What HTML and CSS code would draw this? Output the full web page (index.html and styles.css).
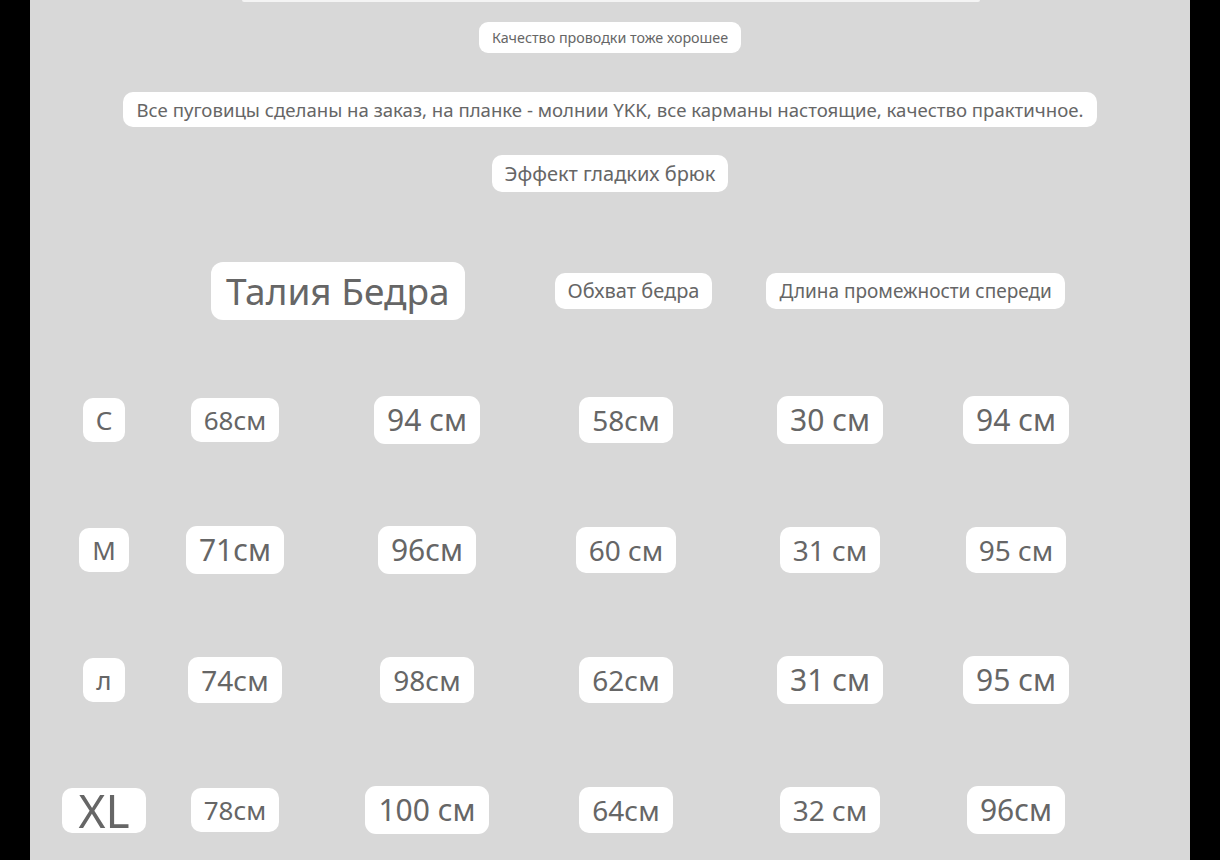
FILE: index.html
```html
<!DOCTYPE html>
<html lang="ru">
<head>
    <meta charset="UTF-8">
    <meta name="viewport" content="width=device-width, initial-scale=1.0">
    <title>Размерная сетка</title>
    <link rel="stylesheet" href="styles.css">
</head>
<body>
    <div class="page">
        <div class="top-edge"></div>

        <div class="notes">
            <span class="pill note-small">Качество проводки тоже хорошее</span>
            <span class="pill note-wide">Все пуговицы сделаны на заказ, на планке - молнии YKK, все карманы настоящие, качество практичное.</span>
            <span class="pill note-mid">Эффект гладких брюк</span>
        </div>

        <div class="head">
            <span class="pill head-main">Талия Бедра</span>
            <span class="pill head-sub" id="hip">Обхват бедра</span>
            <span class="pill head-sub" id="rise">Длина промежности спереди</span>
        </div>

        <div class="sizes">
            <div class="row">
                <span class="pill letter">С</span>
                <span class="pill sm">68см</span>
                <span class="pill lg">94 см</span>
                <span class="pill md">58см</span>
                <span class="pill lg">30 см</span>
                <span class="pill lg">94 см</span>
            </div>
            <div class="row">
                <span class="pill letter">М</span>
                <span class="pill lg">71см</span>
                <span class="pill lg">96см</span>
                <span class="pill md">60 см</span>
                <span class="pill md">31 см</span>
                <span class="pill md">95 см</span>
            </div>
            <div class="row">
                <span class="pill letter">л</span>
                <span class="pill md">74см</span>
                <span class="pill md">98см</span>
                <span class="pill md">62см</span>
                <span class="pill lg">31 см</span>
                <span class="pill lg">95 см</span>
            </div>
            <div class="row">
                <span class="pill letter xl">XL</span>
                <span class="pill sm">78см</span>
                <span class="pill lg">100 см</span>
                <span class="pill md">64см</span>
                <span class="pill md">32 см</span>
                <span class="pill lg">96см</span>
            </div>
        </div>
    </div>
</body>
</html>
```

FILE: styles.css
```css
html,
body {
    margin: 0;
    background-color: black;
}
.page {
    width: 1160px;
    height: 860px;
    margin-left: 30px;
    background-color: #d8d8d8;
    overflow: hidden;
    font-family: "Noto Sans", "Open Sans", sans-serif;
    color: #666;
}
.top-edge {
    height: 2px;
    margin: 0 210px 0 212px;
    background-color: #f4f4f4;
    border-radius: 0 0 40px 40px;
}
.pill {
    display: inline-block;
    background-color: white;
    border-radius: 10px;
    padding: 0 13px;
    white-space: nowrap;
}

/* notes on top */
.notes {
    display: flex;
    flex-direction: column;
    align-items: center;
}
.note-small {
    margin-top: 20px;
    font-size: 14.3px;
    line-height: 31px;
    padding: 0 13px;
    border-radius: 9px;
}
.note-wide {
    margin-top: 39px;
    font-size: 18.6px;
    line-height: 35px;
    padding: 0 14px;
}
.note-mid {
    margin-top: 28px;
    font-size: 20px;
    line-height: 37px;
}

/* column heads */
.head {
    display: flex;
    align-items: center;
    margin-top: 70px;
    padding-left: 181px;
    height: 58px;
}
.head-main {
    font-size: 37px;
    line-height: 58px;
    padding: 0 15px;
    border-radius: 12px;
}
.head-sub {
    font-size: 20px;
    line-height: 36px;
}
#hip {
    margin-left: 90px;
}
#rise {
    margin-left: 54px;
    font-size: 19px;
}

/* size grid */
.sizes {
    margin-top: 35px;
    padding-left: 8px;
}
.row {
    display: grid;
    grid-template-columns: 132px 130px 254px 144px 264px 108px;
    grid-auto-rows: 130px;
    align-items: center;
    justify-items: center;
}
.letter {
    font-size: 26px;
    line-height: 44px;
}
.sm {
    font-size: 26px;
    line-height: 44px;
}
.md {
    font-size: 28px;
    line-height: 46px;
}
.lg {
    font-size: 30px;
    line-height: 48px;
    border-radius: 11px;
}
.xl {
    font-size: 46px;
    line-height: 45px;
    padding: 0 16px;
    filter: blur(0.6px);
}
```
